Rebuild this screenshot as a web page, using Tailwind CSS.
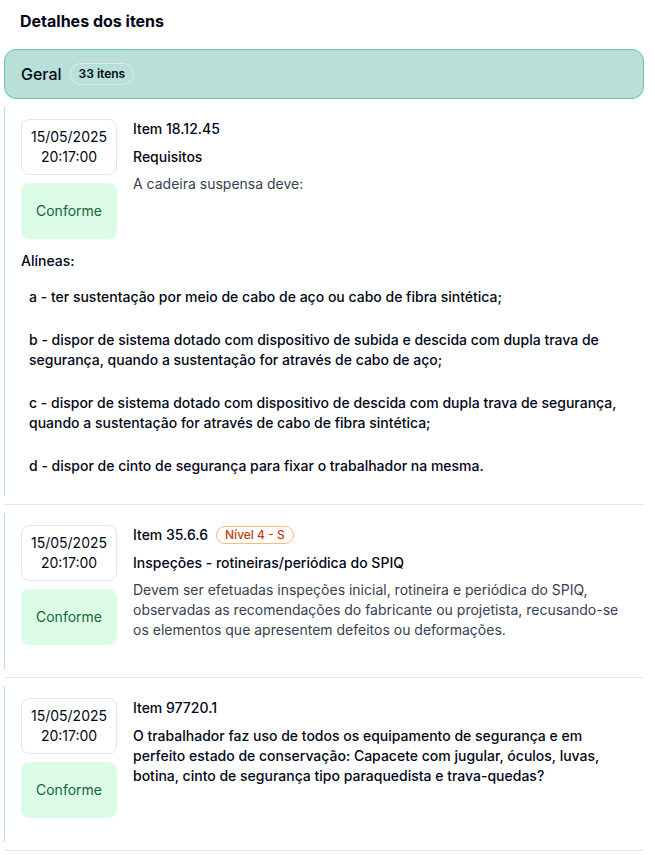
<!DOCTYPE html>
<html lang="pt-BR">
<head>
<meta charset="utf-8">
<meta name="viewport" content="width=device-width, initial-scale=1">
<title>Detalhes dos itens</title>
<script src="https://cdn.jsdelivr.net/npm/@tailwindcss/browser@4"></script>
</head>
<body class="bg-white pl-1 pr-[11px] font-['Inter',sans-serif] text-sm leading-5 text-[#020817]">
<main>
  <h1 class="px-4 pt-[9px] text-base leading-6 font-bold">Detalhes dos itens</h1>

  <header class="mt-4 flex h-[50px] items-center gap-2 rounded-xl border border-[#6dc1b0] bg-[#b8e0d8] px-4">
    <h2 class="text-base font-medium">Geral</h2>
    <span class="rounded-full border border-[#e2e8f0] px-2 py-0.5 text-xs font-semibold">33 itens</span>
  </header>

  <ul class="divide-y divide-[#e2e8f0]">
    <li class="py-2">
      <article class="border-l border-[#b8e0d8] pt-3 pr-4 pb-5 pl-4">
        <div class="flex items-start gap-4">
          <div class="flex w-24 shrink-0 flex-col gap-2 text-center">
            <time datetime="2025-05-15T20:17:00" class="flex h-14 flex-col justify-center rounded-lg border border-[#e2e8f0]"><span>15/05/2025</span><span>20:17:00</span></time>
            <span class="flex h-14 items-center justify-center rounded-lg bg-[#dcfce7] text-[#166534]">Conforme</span>
          </div>
          <div class="min-w-0 flex-1">
            <h3 class="font-medium">Item 18.12.45</h3>
            <p class="mt-2 font-medium">Requisitos</p>
            <p class="mt-[7px] text-[#374151]">A cadeira suspensa deve:</p>
          </div>
        </div>
        <h4 class="mt-3 font-medium">Alíneas:</h4>
        <ul class="mt-4 flex flex-col gap-[23px] px-2 font-medium">
          <li>a - ter sustentação por meio de cabo de aço ou cabo de fibra sintética;</li>
          <li>b - dispor de sistema dotado com dispositivo de subida e descida com dupla trava de segurança, quando a sustentação for através de cabo de aço;</li>
          <li>c - dispor de sistema dotado com dispositivo de descida com dupla trava de segurança, quando a sustentação for através de cabo de fibra sintética;</li>
          <li>d - dispor de cinto de segurança para fixar o trabalhador na mesma.</li>
        </ul>
      </article>
    </li>

    <li class="py-2">
      <article class="border-l border-[#b8e0d8] pt-3 pr-4 pb-6 pl-4">
        <div class="flex items-start gap-4">
          <div class="flex w-24 shrink-0 flex-col gap-2 text-center">
            <time datetime="2025-05-15T20:17:00" class="flex h-14 flex-col justify-center rounded-lg border border-[#e2e8f0]"><span>15/05/2025</span><span>20:17:00</span></time>
            <span class="flex h-14 items-center justify-center rounded-lg bg-[#dcfce7] text-[#166534]">Conforme</span>
          </div>
          <div class="min-w-0 flex-1">
            <div class="flex items-center gap-2">
              <h3 class="font-medium">Item 35.6.6</h3>
              <span class="rounded-full border border-[#fdba74] px-2 text-xs font-medium text-[#c2410c]">Nível 4 - S</span>
            </div>
            <p class="mt-2 font-medium">Inspeções - rotineiras/periódica do SPIQ</p>
            <p class="mt-[7px] text-[#374151]">Devem ser efetuadas inspeções inicial, rotineira e periódica do SPIQ, observadas as recomendações do fabricante ou projetista, recusando-se os elementos que apresentem defeitos ou deformações.</p>
          </div>
        </div>
      </article>
    </li>

    <li class="border-b border-[#e2e8f0] py-2">
      <article class="border-l border-[#b8e0d8] pt-3 pr-4 pb-6 pl-4">
        <div class="flex items-start gap-4">
          <div class="flex w-24 shrink-0 flex-col gap-2 text-center">
            <time datetime="2025-05-15T20:17:00" class="flex h-14 flex-col justify-center rounded-lg border border-[#e2e8f0]"><span>15/05/2025</span><span>20:17:00</span></time>
            <span class="flex h-14 items-center justify-center rounded-lg bg-[#dcfce7] text-[#166534]">Conforme</span>
          </div>
          <div class="min-w-0 flex-1">
            <h3 class="font-medium">Item 97720.1</h3>
            <p class="mt-2 font-medium">O trabalhador faz uso de todos os equipamento de segurança e em perfeito estado de conservação: Capacete com jugular, óculos, luvas, botina, cinto de segurança tipo paraquedista e trava-quedas?</p>
          </div>
        </div>
      </article>
    </li>
  </ul>
</main>
</body>
</html>
